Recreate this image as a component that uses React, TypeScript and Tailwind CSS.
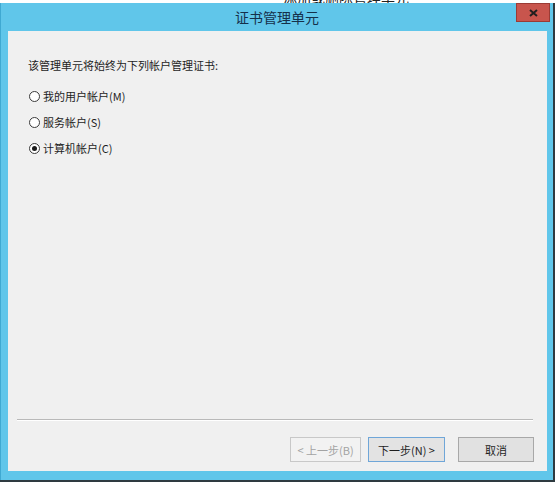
import React from 'react'

const font = { fontFamily: '"Noto Sans CJK SC", "Liberation Sans", sans-serif' }

const options = [
  { label: '我的用户帐户(M)', checked: false },
  { label: '服务帐户(S)', checked: false },
  { label: '计算机帐户(C)', checked: true },
]

function Radio({ checked }: { checked: boolean }) {
  return (
    <span className="w-[11px] h-[11px] rounded-full border border-[#3b3b3b] bg-white flex items-center justify-center shrink-0">
      {checked && <span className="w-[5px] h-[5px] rounded-full bg-[#1a1a1a]" />}
    </span>
  )
}

export default function App() {
  return (
    <div className="w-[558px] h-[486px] bg-white relative overflow-hidden" style={font}>
      {/* dialog behind, only its title's lower edge peeks out */}
      <div className="absolute left-[283px] top-[-11px] text-[14px] leading-[16px] text-[#222]">添加或删除管理单元</div>

      <div className="relative mt-[3px] w-[555px] h-[479px] border-r-2 border-b-2 border-[#2e3a40]">
        <div className="h-full border-l border-[#3fa9d2] bg-[#60c6ea] flex flex-col pl-[7px] pr-[6px] pb-[9px]">
          {/* Title bar */}
          <div className="h-[28px] flex items-center justify-center text-[14px] text-[#15304a] -ml-[7px] -mr-[6px]">
            证书管理单元
          </div>
          <button className="absolute top-0 right-[3px] w-[34px] h-[19px] bg-[#c8554d] border border-[#9b3b35] flex items-center justify-center">
            <svg width="9" height="8" viewBox="0 0 9 8">
              <path d="M1 1l7 6M8 1L1 7" stroke="#1f1f1f" strokeWidth="2" />
            </svg>
          </button>

          {/* Content */}
          <div className="flex-1 bg-[#f0f0f0] flex flex-col text-[11px] leading-[16px] text-[#1e1e1e]">
            <p className="mt-[26px] ml-[20px]">该管理单元将始终为下列帐户管理证书:</p>
            <div className="mt-[15px] ml-[21px] flex flex-col gap-[10px]">
              {options.map((o) => (
                <label key={o.label} className="flex items-center gap-[3px]">
                  <Radio checked={o.checked} />
                  <span>{o.label}</span>
                </label>
              ))}
            </div>

            <div className="flex-1" />

            <div className="ml-[9px] mr-[14px] h-[2px] border-t border-[#b9b9b9] border-b border-b-white" />

            <div className="mt-[16px] mb-[9px] mr-[13px] flex justify-end items-center">
              <button className="w-[71px] h-[25px] border border-[#c8c8c8] bg-[#f2f2f2] text-[#a3a3a3] text-[11px]">
                &lt; 上一步(B)
              </button>
              <button className="ml-[7px] w-[77px] h-[25px] border border-[#6fa6d8] bg-[#e3e3e3] text-[#1e1e1e] text-[11px]">
                下一步(N) &gt;
              </button>
              <button className="ml-[13px] w-[76px] h-[25px] border border-[#a8a8a8] bg-[#e1e1e1] text-[#1e1e1e] text-[11px]">
                取消
              </button>
            </div>
          </div>
        </div>
      </div>
    </div>
  )
}
